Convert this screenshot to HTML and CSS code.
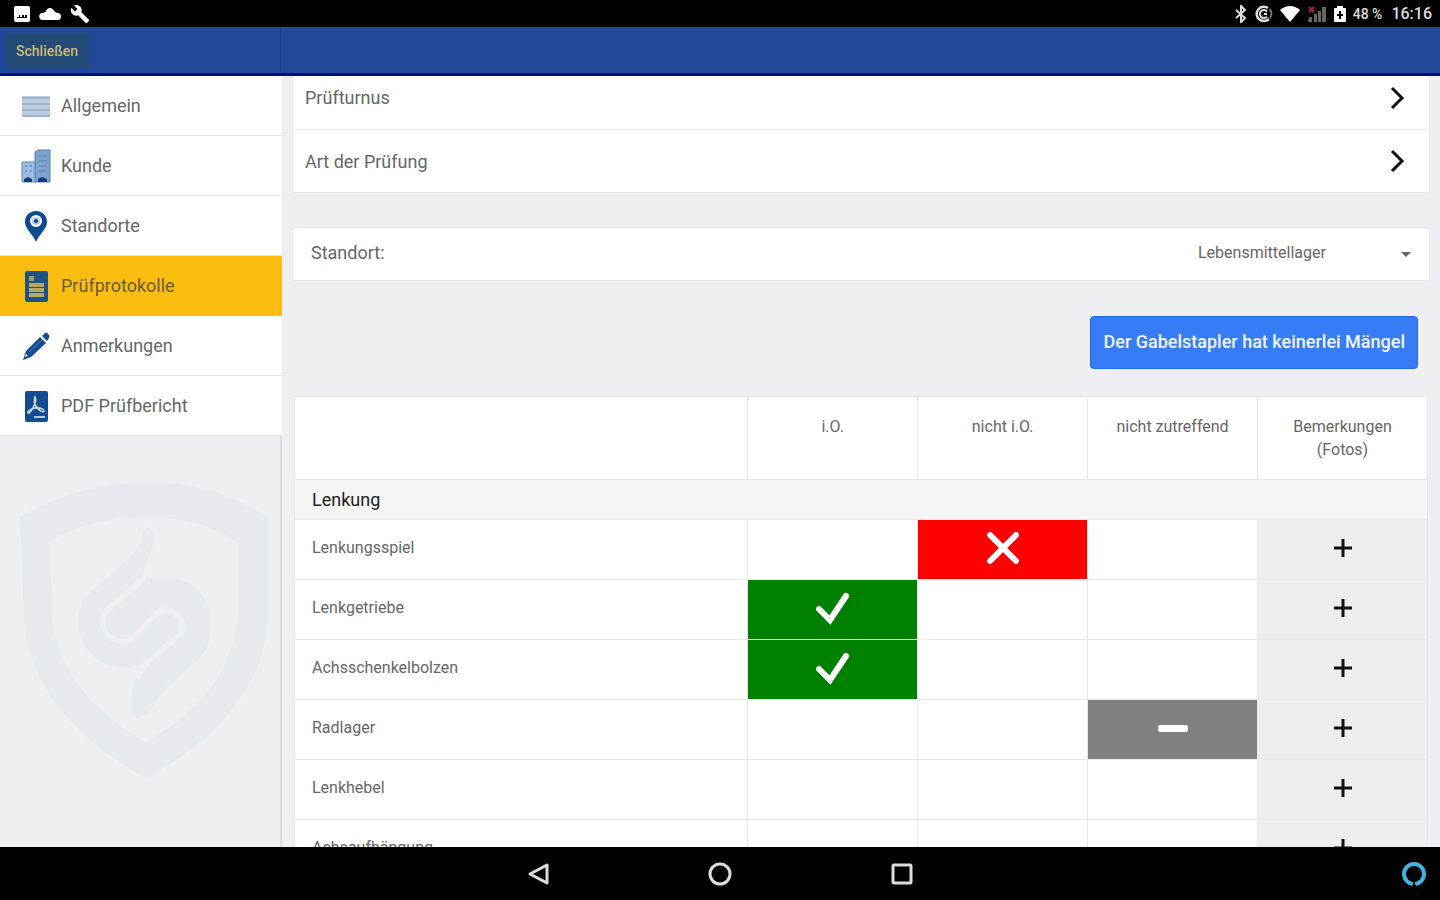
FILE: index.html
```html
<!DOCTYPE html>
<html lang="de">
<head>
<meta charset="utf-8">
<meta name="viewport" content="width=device-width, initial-scale=1">
<title>Prüfprotokolle</title>
<link rel="stylesheet" href="styles.css">
</head>
<body>
<div class="statusbar">
  <div class="status-group status-left">
    <svg width="16" height="16" viewBox="0 0 16 16"><path fill="#fff" fill-rule="evenodd" d="M2 0h12q2 0 2 2v12q0 2-2 2H2q-2 0-2-2V2q0-2 2-2zM3 12h10v-3h-2v2h-1V9H8v2H6V9H5v2H3z"/></svg>
    <svg width="22" height="14" viewBox="0 0 22 14"><path fill="#fff" d="M4 13a3.500 3.500 0 0 1-.5-7l3-1Q8 1 11 1t5 4l2.500 1a3.500 3.500 0 0 1 0 7z"/></svg>
    <svg width="20" height="20" viewBox="0 0 24 24"><path fill="#fff" d="M22.700 19l-9.100-9.100c.9-2.300.4-5-1.500-6.900-2-2-5-2.400-7.400-1.300L9 6 6 9 1.600 4.700C.4 7.100.9 10.100 2.900 12.100c1.900 1.900 4.600 2.400 6.900 1.500l9.100 9.100c.4.4 1 .4 1.400 0l2.300-2.300c.5-.4.5-1.100.1-1.400z"/></svg>
  </div>
  <div class="status-group status-right">
    <svg width="14" height="18" viewBox="0 0 14 18"><path fill="none" stroke="#ddd" stroke-width="2" d="M2 5l9 8-4 4V1l4 4-9 8"/></svg>
    <svg width="18" height="18" viewBox="0 0 18 18"><path fill="none" stroke="#ddd" stroke-width="2.500" d="M13 3A7.200 7.200 0 1 0 14 14"/><path fill="none" stroke="#ddd" stroke-width="2" d="M12 6.500a4 4 0 1 0 0 5M9 9h3"/><path fill="none" stroke="#777" stroke-width="2" d="M14.500 4a7.200 7.200 0 0 1 .5 9"/></svg>
    <svg width="20" height="16" viewBox="0 0 20 16"><path fill="#fff" d="M0 4q10-8 20 0L10 16z"/></svg>
    <svg width="20" height="18" viewBox="0 0 20 18"><path fill="#666" d="M2 12h3v5H1zM7 9h3v8H7zM11 6h3v11h-3zM15 2h4v15h-4z"/><path stroke="#b51f3c" stroke-width="2" d="M2 2l5 5M7 2L2 7"/></svg>
    <svg width="12" height="16" viewBox="0 0 12 16"><path fill="#fff" fill-rule="evenodd" d="M3 2V0h6v2h2q1 0 1 1v12q0 1-1 1H1q-1 0-1-1V3q0-1 1-1zM5 5v3H3v2h2v3h2v-3h2V8H7V5z"/></svg>
    <span class="battery">48 %</span>
    <span class="clock">16:16</span>
  </div>
</div>

<header class="toolbar">
  <div class="toolbar-side"><button class="close-btn" type="button">Schließen</button></div>
</header>

<div class="workspace">
  <aside class="sidebar">
    <nav class="menu">
      <a class="menu-item" href="#allgemein">
        <svg width="30" height="32" viewBox="0 0 30 32"><path fill="#bccbe0" d="M1 6h28v21H1z"/><path stroke="#9fb2ce" stroke-width="2" d="M1 8h28M1 14h28M1 20h28M1 26h28"/></svg>
        <span>Allgemein</span></a>
      <a class="menu-item" href="#kunde">
        <svg width="30" height="34" viewBox="0 0 30 34"><path fill="#7fa3cd" stroke="#4f7db3" d="M14 3l3-2h12v32H14z"/><path fill="#9dbbdc" stroke="#5c88bc" d="M1 13h13v20H1z"/><path stroke="#6d95c4" stroke-width="2" d="M18 7h8M18 12h8M18 17h8M18 22h8M4 17h2M9 17h2M4 22h2M9 22h2"/><path fill="#123f7c" d="M3 33v-3l4-2 4 2v3zM17 33v-3l4-2 5 2v3z"/></svg>
        <span>Kunde</span></a>
      <a class="menu-item" href="#standorte">
        <svg width="30" height="32" viewBox="0 0 30 32"><path fill="#0e4a8f" d="M15 1C8 1 4 6 4 12c0 7 7 11 11 20 4-9 11-13 11-20 0-6-4-11-11-11z"/><circle cx="15" cy="11" r="6" fill="#fff"/><circle cx="15" cy="11" r="4" fill="#b9cbe0"/><circle cx="15" cy="11" r="2" fill="#0e4a8f"/></svg>
        <span>Standorte</span></a>
      <a class="menu-item active" href="#pruefprotokolle" aria-current="page">
        <svg width="30" height="32" viewBox="0 0 30 32"><rect x="4" y="1" width="23" height="31" rx="2" fill="#1d5486"/><path fill="#a39a62" d="M8 6h5v5H8z"/><path stroke="#b7a95d" stroke-width="4" d="M8 15h15M8 20h15M8 25h15"/></svg>
        <span>Prüfprotokolle</span></a>
      <a class="menu-item" href="#anmerkungen">
        <svg width="30" height="30" viewBox="0 0 30 30"><path fill="#124d91" d="M2 29l3-9L19 6l6 6-15 14zM21 5l3-3q2-1 3 1l1 1q1 1 0 3l-2 3z"/><path fill="#fff" d="M4 26l1-3 2 2z"/><path stroke="#5886bb" d="M8 21L21 9"/></svg>
        <span>Anmerkungen</span></a>
      <a class="menu-item" href="#pdf">
        <svg width="30" height="32" viewBox="0 0 30 32"><rect x="4" y="1" width="23" height="31" rx="2" fill="#124d91"/><path fill="none" stroke="#d4e0ee" stroke-width="1.500" d="M14 7c2 3 0 7-2 11-2 3-4 6-5 5s2-4 7-5 9 1 9 3-5 0-8-5c-2-3-2-6-1-9z"/><path stroke="#b5c8de" stroke-width="2" d="M13 27h11"/></svg>
        <span>PDF Prüfbericht</span></a>
    </nav>
    <svg class="watermark" viewBox="0 0 248 296" aria-hidden="true">
      <path fill="#e6e9ed" fill-rule="evenodd" d="M0 36Q60 2 125 1T248 36V130C248 205 193 261 126 297 61 261 4 205 4 130zM30 60Q70 36 126 36T218 62V128C218 184 180 232 126 261 72 232 32 184 32 128z"/>
      <path fill="#e6e9ed" d="M128 46Q138 52 134 62C129 72 130 80 128 98Q134 97 147 97C175 98 191 118 191 142 191 158 188 170 177 179L150 203C136 215 134 233 118 237Q110 236 112 226C112 206 115 194 123 182Q114 187 100 186C75 184 58 164 58 139Q59 119 73 109L108 79Q122 65 124 49z"/>
      <path fill="none" stroke="#eeeef3" stroke-width="6" d="M131 76Q128 93 120 101L93 124C80 134 81 144 86 151 94 163 107 163 114 156L133 136C142 126 152 128 158 135 165 143 163 151 156 157L130 179Q122 186 117 198"/>
    </svg>
  </aside>

  <main class="content">
    <section class="card">
      <button class="link-row" type="button"><span>Prüfturnus</span><svg width="16" height="24" viewBox="0 0 16 24"><path fill="none" stroke="#111" stroke-width="3" d="M2 2l10 10L2 22"/></svg></button>
      <button class="link-row" type="button"><span>Art der Prüfung</span><svg width="16" height="24" viewBox="0 0 16 24"><path fill="none" stroke="#111" stroke-width="3" d="M2 2l10 10L2 22"/></svg></button>
    </section>

    <section class="card location">
      <label for="location">Standort:</label>
      <div class="select-wrap">
        <select id="location"><option>Lebensmittellager</option></select>
        <svg class="caret" width="10" height="5" viewBox="0 0 10 5"><path fill="#666" d="M0 0h10L5 5z"/></svg>
      </div>
    </section>

    <div class="actions"><button class="primary-btn" type="button">Der Gabelstapler hat keinerlei Mängel</button></div>

    <table class="checklist">
      <colgroup><col class="col-name"><col><col><col><col></colgroup>
      <thead>
        <tr><td></td><th scope="col">i.O.</th><th scope="col">nicht i.O.</th><th scope="col">nicht zutreffend</th><th scope="col">Bemerkungen<br>(Fotos)</th></tr>
      </thead>
      <tbody>
        <tr class="group"><th colspan="5" scope="colgroup">Lenkung</th></tr>
        <tr><th scope="row">Lenkungsspiel</th><td></td><td class="bad"><svg width="34" height="34" viewBox="0 0 34 34"><path stroke="#fff" stroke-width="6" stroke-linecap="round" d="M4 4l26 26M30 4L4 30"/></svg></td><td></td><td class="note"><button type="button" aria-label="Bemerkung hinzufügen"><svg width="18" height="18" viewBox="0 0 18 18"><path stroke="#111" stroke-width="3" d="M9 0v18M0 9h18"/></svg></button></td></tr>
        <tr><th scope="row">Lenkgetriebe</th><td class="ok"><svg width="34" height="34" viewBox="0 0 34 34"><path fill="none" stroke="#fff" stroke-width="6" stroke-linecap="round" d="M3 18l11 11L30 5"/></svg></td><td></td><td></td><td class="note"><button type="button" aria-label="Bemerkung hinzufügen"><svg width="18" height="18" viewBox="0 0 18 18"><path stroke="#111" stroke-width="3" d="M9 0v18M0 9h18"/></svg></button></td></tr>
        <tr><th scope="row">Achsschenkelbolzen</th><td class="ok"><svg width="34" height="34" viewBox="0 0 34 34"><path fill="none" stroke="#fff" stroke-width="6" stroke-linecap="round" d="M3 18l11 11L30 5"/></svg></td><td></td><td></td><td class="note"><button type="button" aria-label="Bemerkung hinzufügen"><svg width="18" height="18" viewBox="0 0 18 18"><path stroke="#111" stroke-width="3" d="M9 0v18M0 9h18"/></svg></button></td></tr>
        <tr><th scope="row">Radlager</th><td></td><td></td><td class="na"><svg width="34" height="34" viewBox="0 0 34 34"><rect x="2" y="14" width="30" height="7" rx="2" fill="#fff"/></svg></td><td class="note"><button type="button" aria-label="Bemerkung hinzufügen"><svg width="18" height="18" viewBox="0 0 18 18"><path stroke="#111" stroke-width="3" d="M9 0v18M0 9h18"/></svg></button></td></tr>
        <tr><th scope="row">Lenkhebel</th><td></td><td></td><td></td><td class="note"><button type="button" aria-label="Bemerkung hinzufügen"><svg width="18" height="18" viewBox="0 0 18 18"><path stroke="#111" stroke-width="3" d="M9 0v18M0 9h18"/></svg></button></td></tr>
        <tr><th scope="row">Achsaufhängung</th><td></td><td></td><td></td><td class="note"><button type="button" aria-label="Bemerkung hinzufügen"><svg width="18" height="18" viewBox="0 0 18 18"><path stroke="#111" stroke-width="3" d="M9 0v18M0 9h18"/></svg></button></td></tr>
      </tbody>
    </table>
  </main>
</div>

<footer class="navbar">
  <span></span>
  <button type="button" aria-label="Zurück"><svg width="24" height="24" viewBox="0 0 24 24"><path fill="none" stroke="#ddd" stroke-width="3" stroke-linejoin="round" d="M21 3v18L4 12z"/></svg></button>
  <button type="button" aria-label="Start"><svg width="24" height="24" viewBox="0 0 24 24"><circle cx="12" cy="12" r="10" fill="none" stroke="#ddd" stroke-width="3"/></svg></button>
  <button type="button" aria-label="Übersicht"><svg width="24" height="24" viewBox="0 0 24 24"><rect x="3" y="3" width="18" height="18" rx="1" fill="none" stroke="#ddd" stroke-width="3"/></svg></button>
  <button class="assistant" type="button" aria-label="Assistent"><svg width="26" height="26" viewBox="0 0 26 26"><circle cx="13" cy="13" r="10" fill="none" stroke="#43b4dd" stroke-width="4"/><path fill="#000" d="M11 26l2-7 2 7z"/></svg></button>
</footer>
</body>
</html>
```

FILE: styles.css
```css
* { box-sizing: border-box; }

body {
  margin: 0;
  height: 100vh;
  display: flex;
  flex-direction: column;
  overflow: hidden;
  background: #eeeef3;
  color: #666;
  font-family: Roboto, "Noto Sans", sans-serif;
  font-size: 16px;
}

button, select { font: inherit; color: inherit; cursor: pointer; }
svg { display: block; flex: none; }

/* Status bar */
.statusbar {
  flex: none;
  height: 27px;
  padding: 0 8px 0 14px;
  display: flex;
  align-items: center;
  justify-content: space-between;
  background: #000;
  color: #ddd;
}
.status-group { display: flex; align-items: center; }
.status-left { gap: 9px; }
.status-right { gap: 7px; }
.battery { font-size: 14px; font-weight: 500; }
.clock { margin-left: 2px; font-size: 16px; font-weight: 500; }

/* Toolbar */
.toolbar {
  flex: none;
  height: 49px;
  display: flex;
  background: #224999;
  border-bottom: 3px solid #000f80;
}
.toolbar-side {
  width: 281px;
  padding: 6px;
  border-right: 1px solid #1c3f8b;
}
.close-btn {
  height: 35px;
  padding: 0 11px 0 10px;
  display: block;
  border: 0;
  background: #244b76;
  color: #c9b978;
  font-size: 14px;
  font-weight: 500;
}

.workspace { flex: 1; min-height: 0; display: flex; }

/* Sidebar */
.sidebar {
  flex: none;
  width: 282px;
  border-right: 2px solid #dcdce3;
}
.menu { margin-right: -2px; }
.menu-item {
  height: 60px;
  padding: 0 20px 0 21px;
  display: flex;
  align-items: center;
  gap: 10px;
  border-bottom: 1px solid #e6e6ea;
  background: #fff;
  color: #666;
  font-size: 18px;
  text-decoration: none;
}
.menu-item.active {
  background: #fbbe10;
  border-color: #fbbe10;
  color: #6a5a2c;
}
.watermark {
  display: block;
  width: 248px;
  margin: 45px 0 0 20px;
}

/* Content */
.content {
  flex: 1;
  min-width: 0;
  overflow: hidden;
  padding: 0 10px;
}
.card {
  border: 1px solid #e8e8ec;
  background: #fff;
}
.card:first-child { margin-top: -11px; }
.link-row {
  width: 100%;
  height: 63px;
  padding: 0 23px 0 12px;
  display: flex;
  align-items: center;
  justify-content: space-between;
  border: 0;
  background: #fff;
  font-size: 18px;
}
.link-row + .link-row { border-top: 1px solid #ececf0; }

.location {
  height: 54px;
  margin-top: 34px;
  padding: 0 14px 4px 18px;
  display: flex;
  align-items: center;
  justify-content: space-between;
  font-size: 18px;
}
.select-wrap { position: relative; width: 217px; }
.select-wrap select {
  display: block;
  width: 100%;
  padding: 0;
  border: 0;
  appearance: none;
  background: transparent;
  font-size: 16px;
}
.caret {
  position: absolute;
  right: 4px;
  top: 50%;
  pointer-events: none;
}

.actions {
  padding: 35px 12px 27px;
  display: flex;
  justify-content: flex-end;
}
.primary-btn {
  height: 53px;
  padding: 0 12px 2px;
  border: 1px solid #1a6be8;
  border-radius: 4px;
  background: #357cf6;
  color: #f2f6ff;
  font-size: 18px;
  font-weight: 500;
}

/* Checklist */
.checklist {
  width: calc(100% - 4px);
  margin: 0 2px;
  border-collapse: collapse;
  table-layout: fixed;
  background: #fff;
}
.checklist .col-name { width: 40%; }
.checklist th,
.checklist td {
  height: 60px;
  padding: 0 0 4px;
  border: 1px solid #e8e8e8;
  font-weight: 400;
  text-align: center;
}
.checklist thead th {
  height: 83px;
  padding-top: 18px;
  font-size: 16px;
  line-height: 23px;
  vertical-align: top;
}
.checklist tbody th { padding-left: 17px; text-align: left; }
.checklist .group th {
  height: 40px;
  padding-bottom: 1px;
  background: #f5f5f5;
  color: #222;
  font-size: 18px;
}
.checklist td svg { margin: 0 auto; }
.checklist .ok { background: #008000; }
.checklist .bad { background: #f00; }
.checklist .na { background: #808080; }
.checklist .note { background: #eee; }
.note button {
  display: block;
  width: 100%;
  padding: 10px 0;
  border: 0;
  background: transparent;
}

/* System navigation */
.navbar {
  flex: none;
  height: 53px;
  display: grid;
  grid-template-columns: 1fr 182px 182px 182px 1fr;
  align-items: center;
  background: #000;
}
.navbar button {
  padding: 0;
  border: 0;
  background: transparent;
  justify-self: center;
}
.navbar .assistant { justify-self: end; margin-right: 13px; }
```
